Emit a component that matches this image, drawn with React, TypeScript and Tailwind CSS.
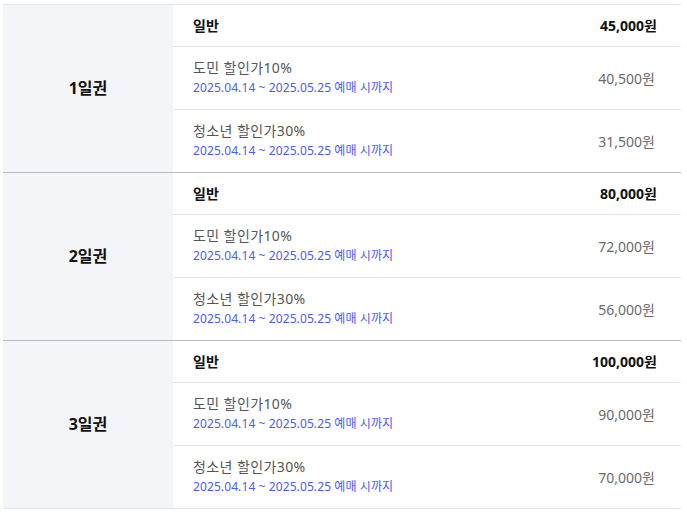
const discounts = [
  { label: "도민 할인가10%", rate: 0.9 },
  { label: "청소년 할인가30%", rate: 0.7 },
];

const tickets = [
  { name: "1일권", price: 45000 },
  { name: "2일권", price: 80000 },
  { name: "3일권", price: 100000 },
];

const period = "2025.04.14 ~ 2025.05.25 예매 시까지";

function won(n: number) {
  return `${n.toLocaleString("en-US")}원`;
}

export default function App() {
  return (
    <div className="min-h-screen bg-white pt-1 pl-[3px] font-['Noto_Sans','Noto_Sans_CJK_KR',sans-serif]">
      <div className="w-[678px] border-t border-[#e1e5ec]">
        {tickets.map((t, i) => (
          <div
            key={t.name}
            className={`flex border-b ${
              i === tickets.length - 1 ? "border-[#e1e5ec]" : "border-[#b3bac8]"
            }`}
          >
            {/* ticket name cell spans all rows */}
            <div className="w-[170px] shrink-0 bg-[#f4f5f9] flex items-center justify-center pb-[2px]">
              <span className="text-base font-bold text-[#111]">{t.name}</span>
            </div>

            <div className="flex-1 flex flex-col">
              <div className="h-[42px] flex items-center justify-between pl-5 pr-6 border-b border-[#e1e5ec]">
                <span className="text-sm font-bold text-[#111]">일반</span>
                <span className="text-sm font-bold text-[#111]">{won(t.price)}</span>
              </div>
              {discounts.map((d, j) => (
                <div
                  key={d.label}
                  className={`flex items-center justify-between pl-5 pr-[26px] ${
                    j < discounts.length - 1 ? "h-[63px] border-b border-[#e1e5ec]" : "h-[62px]"
                  }`}
                >
                  <div className="flex flex-col gap-[1px] pb-[2px]">
                    <span className="text-sm leading-5 tracking-[0.4px] text-[#555]">{d.label}</span>
                    <span className="text-xs leading-[18px] tracking-[0.1px] text-[#4b5cf2]">{period}</span>
                  </div>
                  <span className="text-sm text-[#6b6b6b] pt-[2px]">{won(Math.round(t.price * d.rate))}</span>
                </div>
              ))}
            </div>
          </div>
        ))}
      </div>
    </div>
  );
}
